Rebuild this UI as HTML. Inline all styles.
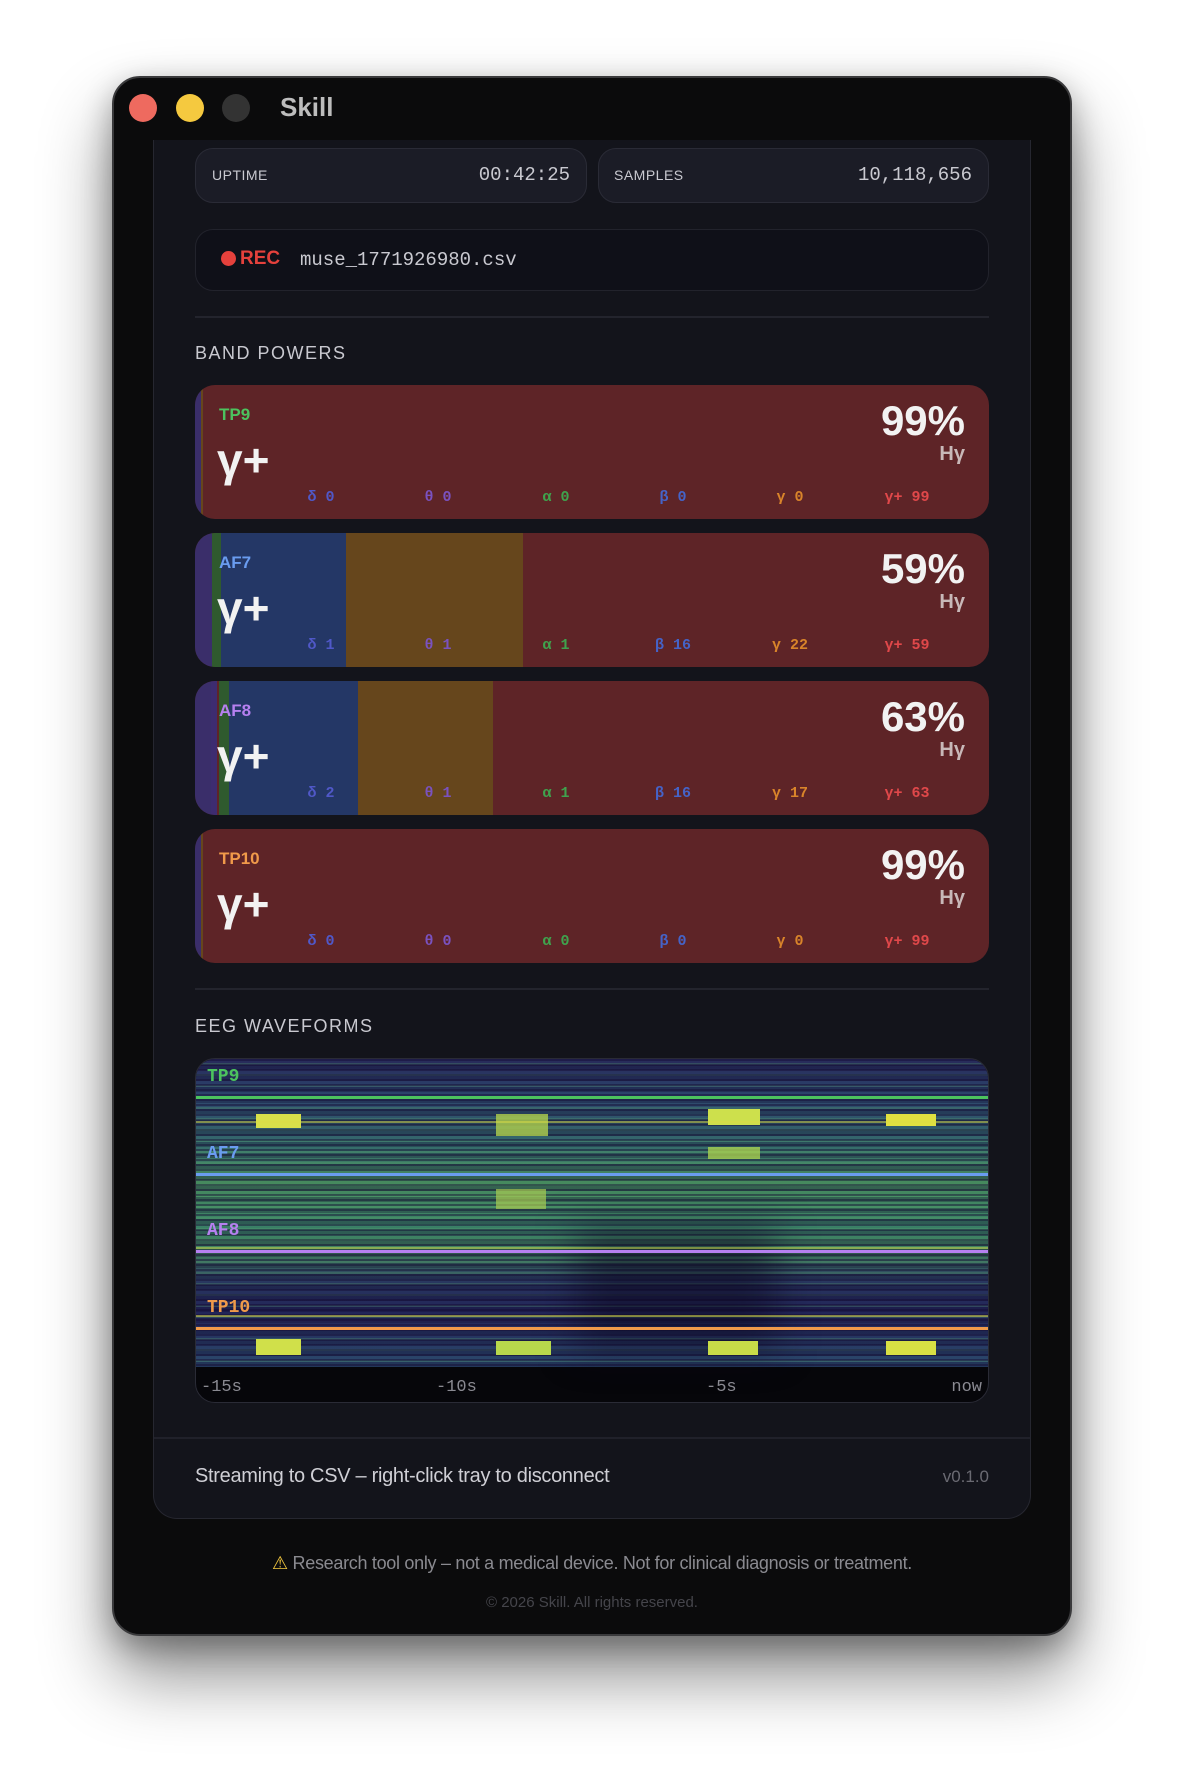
<!DOCTYPE html>
<html><head><meta charset="utf-8"><style>
*{box-sizing:border-box;margin:0;padding:0}
body{width:1184px;height:1784px;background:#fff;position:relative;overflow:hidden;font-family:"Liberation Sans",sans-serif}
.a{position:absolute}
.mono{font-family:"Liberation Mono","DejaVu Sans Mono",monospace}
.win{left:112px;top:76px;width:960px;height:1560px;background:#0b0b0c;border-radius:28px;border:2px solid #3a3a3c;box-shadow:0 40px 70px rgba(0,0,0,.45),0 10px 30px rgba(0,0,0,.3)}
.dot{width:28px;height:28px;border-radius:50%;top:94px}
.panel{left:153px;top:140px;width:878px;height:1379px;background:#13141b;border:1px solid #262730;border-top:none;border-radius:0 0 24px 24px}
.card{background:#1b1c26;border:1.5px solid #2a2b36;border-radius:18px}
.lab{font-size:14px;color:#c9c9d0;letter-spacing:.5px}
.val{font-size:19px;color:#c9c9d0}
.band{left:195px;width:794px;height:134px;border-radius:20px;overflow:hidden;background:#5e2427}
.band .seg{position:absolute;top:0;bottom:0}
.ch{left:24px;top:20px;font-weight:bold;font-size:17px}
.gp{left:22px;top:48px;font-size:46px;font-weight:bold;color:#f2f2f2}
.pct{right:24px;top:12px;font-size:42px;font-weight:bold;color:#f2f2f2}
.hg{right:24px;top:58px;font-size:20px;font-weight:bold;color:#c8b8b8}
.bl{top:104px;font-size:15px;font-weight:bold;width:80px;text-align:center}
.sec{font-size:18px;color:#c9c9d0;letter-spacing:1.5px}
.hr{height:2px;background:#23242d}
</style></head><body>
<div class="a win"></div>
<div class="a dot" style="left:129px;background:#ee6a5f"></div>
<div class="a dot" style="left:176px;background:#f5c93f"></div>
<div class="a dot" style="left:222px;background:#333"></div>
<div class="a" style="left:280px;top:92px;font-size:26px;font-weight:bold;color:#bdbdbd">Skill</div>
<div class="a panel"></div>

<div class="a card" style="left:195px;top:148px;width:392px;height:55px"></div>
<div class="a lab" style="left:212px;top:167px">UPTIME</div>
<div class="a val mono" style="left:400px;width:170px;text-align:right;top:164px">00:42:25</div>
<div class="a card" style="left:598px;top:148px;width:391px;height:55px"></div>
<div class="a lab" style="left:614px;top:167px">SAMPLES</div>
<div class="a val mono" style="left:800px;width:172px;text-align:right;top:164px">10,118,656</div>

<div class="a" style="left:195px;top:229px;width:794px;height:62px;background:#0f1018;border:1.5px solid #22232c;border-radius:18px"></div>
<div class="a" style="left:221px;top:251px;width:15px;height:15px;border-radius:50%;background:#e5413c"></div>
<div class="a" style="left:240px;top:248px;font-size:19px;font-weight:bold;color:#e5413c">REC</div>
<div class="a mono" style="left:300px;top:249px;font-size:19px;color:#c9c9d0">muse_1771926980.csv</div>

<div class="a hr" style="left:195px;top:316px;width:794px"></div>
<div class="a sec" style="left:195px;top:343px">BAND POWERS</div>

<div class="a band" style="top:385px">
 <div class="seg" style="left:0;width:6px;background:#3a2e6a"></div>
 <div class="seg" style="left:6px;width:2px;background:#66461c"></div>
 <div class="a ch" style="color:#4cc35e">TP9</div><div class="a gp">γ+</div>
 <div class="a pct">99%</div><div class="a hg">Hγ</div>
 <div class="a bl mono" style="left:86px;color:#5058c8">δ 0</div><div class="a bl mono" style="left:203px;color:#7a52c0">θ 0</div><div class="a bl mono" style="left:321px;color:#3fa34d">α 0</div><div class="a bl mono" style="left:438px;color:#4563c8">β 0</div><div class="a bl mono" style="left:555px;color:#d9842a">γ 0</div><div class="a bl mono" style="left:672px;color:#e0484a">γ+ 99</div>
</div>
<div class="a band" style="top:533px">
 <div class="seg" style="left:0;width:17px;background:#3a2e6a"></div>
 <div class="seg" style="left:17px;width:9px;background:#2f5a2e"></div>
 <div class="seg" style="left:26px;width:125px;background:#243766"></div>
 <div class="seg" style="left:151px;width:177px;background:#66461c"></div>
 <div class="a ch" style="color:#6a9cf0">AF7</div><div class="a gp">γ+</div>
 <div class="a pct">59%</div><div class="a hg">Hγ</div>
 <div class="a bl mono" style="left:86px;color:#5058c8">δ 1</div><div class="a bl mono" style="left:203px;color:#7a52c0">θ 1</div><div class="a bl mono" style="left:321px;color:#3fa34d">α 1</div><div class="a bl mono" style="left:438px;color:#4563c8">β 16</div><div class="a bl mono" style="left:555px;color:#d9842a">γ 22</div><div class="a bl mono" style="left:672px;color:#e0484a">γ+ 59</div>
</div>
<div class="a band" style="top:681px">
 <div class="seg" style="left:0;width:16px;background:#3a2e6a"></div>
 <div class="seg" style="left:16px;width:6px;background:#3d2c70"></div>
 <div class="seg" style="left:24px;width:10px;background:#2f5a2e"></div>
 <div class="seg" style="left:34px;width:129px;background:#243766"></div>
 <div class="seg" style="left:163px;width:135px;background:#66461c"></div>
 <div class="a ch" style="color:#b680f0">AF8</div><div class="a gp">γ+</div>
 <div class="a pct">63%</div><div class="a hg">Hγ</div>
 <div class="a bl mono" style="left:86px;color:#5058c8">δ 2</div><div class="a bl mono" style="left:203px;color:#7a52c0">θ 1</div><div class="a bl mono" style="left:321px;color:#3fa34d">α 1</div><div class="a bl mono" style="left:438px;color:#4563c8">β 16</div><div class="a bl mono" style="left:555px;color:#d9842a">γ 17</div><div class="a bl mono" style="left:672px;color:#e0484a">γ+ 63</div>
</div>
<div class="a band" style="top:829px">
 <div class="seg" style="left:0;width:6px;background:#3a2e6a"></div>
 <div class="seg" style="left:6px;width:2px;background:#66461c"></div>
 <div class="a ch" style="color:#f09a4a">TP10</div><div class="a gp">γ+</div>
 <div class="a pct">99%</div><div class="a hg">Hγ</div>
 <div class="a bl mono" style="left:86px;color:#5058c8">δ 0</div><div class="a bl mono" style="left:203px;color:#7a52c0">θ 0</div><div class="a bl mono" style="left:321px;color:#3fa34d">α 0</div><div class="a bl mono" style="left:438px;color:#4563c8">β 0</div><div class="a bl mono" style="left:555px;color:#d9842a">γ 0</div><div class="a bl mono" style="left:672px;color:#e0484a">γ+ 99</div>
</div>

<div class="a hr" style="left:195px;top:988px;width:794px"></div>
<div class="a sec" style="left:195px;top:1016px">EEG WAVEFORMS</div>

<div class="a" style="left:195px;top:1058px;width:794px;height:345px;border-radius:20px;overflow:hidden;background:#06060a;border:1px solid #2a2b36">
 <div class="a" style="left:0;top:0;width:794px;height:308px;background:
  repeating-linear-gradient(180deg,rgba(20,10,50,.45) 0 2px,rgba(0,0,0,0) 2px 5px),
  repeating-linear-gradient(180deg,rgba(0,0,0,0) 0 4px,rgba(90,170,110,.25) 4px 6px,rgba(15,10,45,.3) 6px 11px),
  linear-gradient(180deg,#272a5a 0%,#2c456c 12%,#356b6c 28%,#468a5e 40%,#3a7f66 55%,#43845e 62%,#293860 72%,#222458 82%,#2b4a6c 100%)"></div>
 <div class="a" style="left:380px;top:170px;width:200px;height:120px;background:rgba(10,5,30,.5);filter:blur(20px)"></div>
 <div class="a" style="left:60px;top:55px;width:45px;height:14px;background:#d7e04a"></div>
 <div class="a" style="left:300px;top:55px;width:52px;height:22px;background:#a8c84e;opacity:.85"></div>
 <div class="a" style="left:512px;top:50px;width:52px;height:16px;background:#cde04c"></div>
 <div class="a" style="left:690px;top:55px;width:50px;height:12px;background:#e0e040"></div>
 <div class="a" style="left:512px;top:88px;width:52px;height:12px;background:#a8d050;opacity:.8"></div>
 <div class="a" style="left:300px;top:130px;width:50px;height:20px;background:#a8cc52;opacity:.7"></div>
 <div class="a" style="left:60px;top:280px;width:45px;height:16px;background:#d0e04a"></div>
 <div class="a" style="left:300px;top:282px;width:55px;height:14px;background:#b8d84c"></div>
 <div class="a" style="left:512px;top:282px;width:50px;height:14px;background:#c8dc48"></div>
 <div class="a" style="left:690px;top:282px;width:50px;height:14px;background:#d8e044"></div>
 <div class="a" style="left:0;top:62px;width:794px;height:2px;background:rgba(220,220,70,.5)"></div>
 <div class="a" style="left:0;top:188px;width:794px;height:2px;background:rgba(220,220,70,.45)"></div>
 <div class="a" style="left:0;top:256px;width:794px;height:2px;background:rgba(220,220,70,.55)"></div>
 <div class="a" style="left:0;top:37px;width:794px;height:3px;background:#4cc35e"></div>
 <div class="a" style="left:0;top:114px;width:794px;height:3px;background:#6a9cf0"></div>
 <div class="a" style="left:0;top:191px;width:794px;height:3px;background:#b680f0"></div>
 <div class="a" style="left:0;top:268px;width:794px;height:3px;background:#f09a4a"></div>
 <div class="a mono" style="left:11px;top:8px;font-size:18px;font-weight:bold;color:#4cc35e">TP9</div>
 <div class="a mono" style="left:11px;top:85px;font-size:18px;font-weight:bold;color:#6a9cf0">AF7</div>
 <div class="a mono" style="left:11px;top:162px;font-size:18px;font-weight:bold;color:#b680f0">AF8</div>
 <div class="a mono" style="left:11px;top:239px;font-size:18px;font-weight:bold;color:#f09a4a">TP10</div>
 <div class="a mono" style="left:5px;top:319px;font-size:17px;color:#8a8a92">-15s</div>
 <div class="a mono" style="left:240px;top:319px;font-size:17px;color:#8a8a92">-10s</div>
 <div class="a mono" style="left:510px;top:319px;font-size:17px;color:#8a8a92">-5s</div>
 <div class="a mono" style="right:6px;top:319px;font-size:17px;color:#8a8a92">now</div>
</div>

<div class="a" style="left:154px;top:1437px;width:876px;height:2px;background:#20212a"></div>
<div class="a" style="left:195px;top:1465px;font-size:20px;color:#cfcfd5;letter-spacing:-.3px">Streaming to CSV – right-click tray to disconnect</div>
<div class="a" style="right:195px;top:1467px;font-size:17px;color:#6a6a72">v0.1.0</div>

<div class="a" style="left:0;width:1184px;top:1553px;text-align:center;font-size:18px;color:#8a8a90;letter-spacing:-.3px"><span style="color:#f5c93f">⚠</span> Research tool only – not a medical device. Not for clinical diagnosis or treatment.</div>
<div class="a" style="left:0;width:1184px;top:1594px;text-align:center;font-size:15px;color:#45454b">© 2026 Skill. All rights reserved.</div>
</body></html>
